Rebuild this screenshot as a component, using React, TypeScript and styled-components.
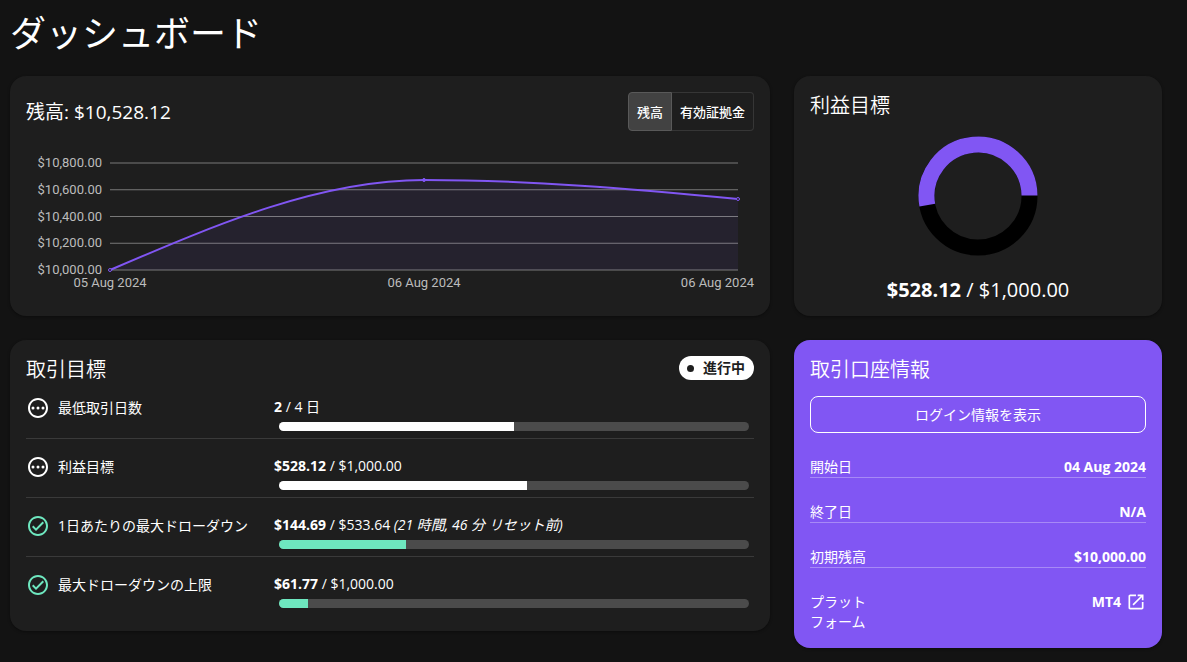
import React from "react";
import styled, { createGlobalStyle } from "styled-components";

const purple = "#8156f3";
const mint = "#6ee7bf";

const GlobalStyle = createGlobalStyle`
  * { box-sizing: border-box; }
  body {
    margin: 0;
    background: #131313;
    color: #fff;
    font-family: "Open Sans", "Noto Sans CJK JP", sans-serif;
    font-size: 14px;
    line-height: 20px;
  }
  h1, h2, p, dl, dd, ul { margin: 0; padding: 0; font-weight: 400; }
  ul { list-style: none; }
`;

const Page = styled.main`
  padding: 8px 25px 14px 10px;
`;

const PageTitle = styled.h1`
  font-family: "Noto Sans CJK JP", sans-serif;
  font-size: 36px;
  font-weight: 400;
  line-height: 46px;
  margin-bottom: 22px;
`;

const Grid = styled.div`
  display: grid;
  grid-template-columns: repeat(3, minmax(0, 1fr));
  gap: 24px;
  align-items: start;
`;

const Card = styled.section<{ $wide?: boolean; $accent?: boolean; $tall?: boolean }>`
  grid-column: span ${(p) => (p.$wide ? 2 : 1)};
  min-height: ${(p) => (p.$tall ? "240px" : "0")};
  padding: 16px;
  border-radius: 16px;
  background: ${(p) => (p.$accent ? purple : "#1e1e1e")};
  box-shadow: 0 1px 3px rgba(0, 0, 0, 0.4);
`;

const CardHeader = styled.header<{ $center?: boolean }>`
  display: flex;
  align-items: ${(p) => (p.$center ? "center" : "flex-start")};
  justify-content: space-between;
`;

const CardTitle = styled.h2`
  font-size: 20px;
  font-weight: 350;
  line-height: 28px;
`;

const BalanceTitle = styled(CardTitle)`
  font-size: 19px;
  font-weight: 400;
`;

const ToggleGroup = styled.div`
  display: flex;
`;

const ToggleButton = styled.button<{ $active?: boolean }>`
  height: 39px;
  padding: 0 8px;
  border: 1px solid ${(p) => (p.$active ? "#595959" : "#363636")};
  border-left-width: ${(p) => (p.$active ? "1px" : "0")};
  border-radius: ${(p) => (p.$active ? "4px 0 0 4px" : "0 4px 4px 0")};
  background: ${(p) => (p.$active ? "#424242" : "transparent")};
  color: #fff;
  font-family: inherit;
  font-size: 13px;
  font-weight: 500;
`;

const ChartArea = styled.div`
  margin-top: 24px;
`;

const PlotRow = styled.div`
  display: flex;
  gap: 8px;
  padding-right: 16px;
`;

const YAxis = styled.ul`
  display: flex;
  flex-direction: column;
  justify-content: space-between;
  width: 76px;
  height: 123px;
  color: #bcbcbc;
  font-family: Roboto, sans-serif;
  font-size: 13px;
  line-height: 16px;
  text-align: right;
`;

const Plot = styled.svg`
  display: block;
  flex: 1;
  min-width: 0;
  height: 123px;
  overflow: visible;
`;

const XAxis = styled.ul`
  display: grid;
  grid-template-columns: 1fr 1fr 16px;
  padding-left: 84px;
  margin-top: -3px;
  color: #bcbcbc;
  font-family: Roboto, sans-serif;
  font-size: 13px;
  line-height: 16px;
  white-space: nowrap;
`;

const XTick = styled.li<{ $end?: boolean }>`
  display: flex;
  width: ${(p) => (p.$end ? "100%" : "0")};
  justify-content: ${(p) => (p.$end ? "flex-end" : "center")};
`;

const Donut = styled.svg`
  display: block;
  width: 120px;
  height: 120px;
  margin: 16px auto 24px;
`;

const ProfitText = styled.p`
  font-size: 20px;
  line-height: 20px;
  text-align: center;
`;

const StatusChip = styled.span`
  display: flex;
  align-items: center;
  gap: 9px;
  height: 24px;
  padding: 0 9px 0 8px;
  border-radius: 12px;
  background: #fff;
  color: #1e1e1e;
  font-weight: 700;
`;

const Dot = styled.span`
  width: 7px;
  height: 7px;
  border-radius: 50%;
  background: #1e1e1e;
`;

const GoalRow = styled.li`
  display: grid;
  grid-template-columns: 248px minmax(0, 1fr);
  height: 59px;
  padding-top: 16px;
  border-bottom: 1px solid #3a3a3a;

  &:first-child { height: 55px; padding-top: 12px; }
  &:last-child { height: 58px; border-bottom: 0; }
`;

const GoalLabel = styled.div`
  display: flex;
  align-items: center;
  gap: 8px;
  height: 24px;
`;

const GoalIcon = styled.svg`
  flex: none;
  width: 24px;
  height: 24px;
`;

const GoalValue = styled.p`
  line-height: 22px;
`;

const ProgressTrack = styled.div`
  height: 9px;
  margin: 4px 5px 0;
  border-radius: 5px;
  background: #4b4b4b;
  overflow: hidden;
`;

const ProgressFill = styled.div<{ $color: string }>`
  height: 100%;
  background: ${(p) => p.$color};
`;

const LoginButton = styled.button`
  display: block;
  width: 100%;
  height: 37px;
  margin: 12px 0 24px;
  border: 1px solid #fff;
  border-radius: 8px;
  background: transparent;
  color: #fff;
  font: inherit;
`;

const Details = styled.dl`
  display: grid;
  gap: 24px;
`;

const DetailRow = styled.div`
  display: flex;
  justify-content: space-between;
  align-items: flex-start;
  border-bottom: 1px solid rgba(255, 255, 255, 0.3);

  &:last-child { border-bottom: 0; }
`;

const DetailTerm = styled.dt`
  max-width: 64px;
`;

const DetailValue = styled.dd`
  display: flex;
  align-items: center;
  gap: 5px;
  font-weight: 700;
`;

const PlatformLink = styled.a`
  display: flex;
  color: inherit;
`;

const goals = [
  { label: "最低取引日数", value: "2", total: "/ 4 日", note: "", percent: 50, done: false },
  { label: "利益目標", value: "$528.12", total: "/ $1,000.00", note: "", percent: 52.8, done: false },
  { label: "1日あたりの最大ドローダウン", value: "$144.69", total: "/ $533.64", note: "(21 時間, 46 分 リセット前)", percent: 27.1, done: true },
  { label: "最大ドローダウンの上限", value: "$61.77", total: "/ $1,000.00", note: "", percent: 6.2, done: true },
];

function StatusIcon({ done }: { done: boolean }) {
  return done ? (
    <GoalIcon viewBox="0 0 24 24" fill={mint} aria-hidden="true">
      <path d="M12 2C6.48 2 2 6.48 2 12s4.48 10 10 10 10-4.48 10-10S17.52 2 12 2zm0 18c-4.41 0-8-3.59-8-8s3.59-8 8-8 8 3.59 8 8-3.59 8-8 8zm4.59-12.42L10 14.17l-2.59-2.58L6 13l4 4 8-8z" />
    </GoalIcon>
  ) : (
    <GoalIcon viewBox="0 0 24 24" fill="#fff" aria-hidden="true">
      <path d="M12 2C6.48 2 2 6.48 2 12s4.48 10 10 10 10-4.48 10-10S17.52 2 12 2zm0 18c-4.42 0-8-3.58-8-8s3.58-8 8-8 8 3.58 8 8-3.58 8-8 8z" />
      <circle cx="7" cy="12" r="1.5" />
      <circle cx="12" cy="12" r="1.5" />
      <circle cx="17" cy="12" r="1.5" />
    </GoalIcon>
  );
}

const gridLines = [8, 34.75, 61.5, 88.25, 115];
const curve = "M0 115C105 70 209 25 314 25C419 25 523 34 628 44";

function BalanceChart() {
  return (
    <ChartArea>
      <PlotRow>
        <YAxis>
          {["$10,800.00", "$10,600.00", "$10,400.00", "$10,200.00", "$10,000.00"].map((t) => (
            <li key={t}>{t}</li>
          ))}
        </YAxis>
        <Plot viewBox="0 0 628 123" preserveAspectRatio="none" role="img" aria-label="残高">
          <path d={`${curve}V115H0Z`} fill={purple} fillOpacity="0.08" />
          {gridLines.map((y) => (
            <line key={y} x1="0" x2="628" y1={y} y2={y} stroke="#fff" strokeOpacity="0.4" />
          ))}
          <path d={curve} fill="none" stroke={purple} strokeWidth="2" />
          <circle cx="0" cy="115" r="1.5" fill="#1e1e1e" stroke={purple} />
          <circle cx="314" cy="25" r="1.5" fill={purple} stroke={purple} />
          <circle cx="628" cy="44" r="1.5" fill="#1e1e1e" stroke={purple} />
        </Plot>
      </PlotRow>
      <XAxis>
        <XTick>05 Aug 2024</XTick>
        <XTick>06 Aug 2024</XTick>
        <XTick $end>06 Aug 2024</XTick>
      </XAxis>
    </ChartArea>
  );
}

export default function App() {
  return (
    <>
      <GlobalStyle />
      <Page>
        <PageTitle>ダッシュボード</PageTitle>
        <Grid>
          <Card $wide $tall>
            <CardHeader $center>
              <BalanceTitle>残高: $10,528.12</BalanceTitle>
              <ToggleGroup>
                <ToggleButton type="button" $active aria-pressed="true">残高</ToggleButton>
                <ToggleButton type="button" aria-pressed="false">有効証拠金</ToggleButton>
              </ToggleGroup>
            </CardHeader>
            <BalanceChart />
          </Card>

          <Card $tall>
            <CardTitle>利益目標</CardTitle>
            <Donut viewBox="0 0 120 120" fill="none" strokeWidth="16" role="img" aria-label="利益目標">
              <circle cx="60" cy="60" r="51.5" stroke="#000" />
              <path d="M111.5 59.5A51.5 51.5 0 1 0 9.3 69.1" stroke={purple} />
            </Donut>
            <ProfitText>
              <b>$528.12</b> / $1,000.00
            </ProfitText>
          </Card>

          <Card $wide>
            <CardHeader>
              <CardTitle>取引目標</CardTitle>
              <StatusChip>
                <Dot />
                進行中
              </StatusChip>
            </CardHeader>
            <ul>
              {goals.map((g) => (
                <GoalRow key={g.label}>
                  <GoalLabel>
                    <StatusIcon done={g.done} />
                    {g.label}
                  </GoalLabel>
                  <div>
                    <GoalValue>
                      <b>{g.value}</b> {g.total} {g.note && <i>{g.note}</i>}
                    </GoalValue>
                    <ProgressTrack role="progressbar" aria-label={g.label} aria-valuenow={g.percent}>
                      <ProgressFill $color={g.done ? mint : "#fff"} style={{ width: `${g.percent}%` }} />
                    </ProgressTrack>
                  </div>
                </GoalRow>
              ))}
            </ul>
          </Card>

          <Card $accent>
            <CardTitle>取引口座情報</CardTitle>
            <LoginButton type="button">ログイン情報を表示</LoginButton>
            <Details>
              <DetailRow>
                <DetailTerm>開始日</DetailTerm>
                <DetailValue>04 Aug 2024</DetailValue>
              </DetailRow>
              <DetailRow>
                <DetailTerm>終了日</DetailTerm>
                <DetailValue>N/A</DetailValue>
              </DetailRow>
              <DetailRow>
                <DetailTerm>初期残高</DetailTerm>
                <DetailValue>$10,000.00</DetailValue>
              </DetailRow>
              <DetailRow>
                <DetailTerm>プラットフォーム</DetailTerm>
                <DetailValue>
                  MT4
                  <PlatformLink href="#platform" aria-label="MT4">
                    <svg width="20" height="20" viewBox="0 0 24 24" fill="#fff" aria-hidden="true">
                      <path d="M19 19H5V5h7V3H5c-1.11 0-2 .9-2 2v14c0 1.1.89 2 2 2h14c1.1 0 2-.9 2-2v-7h-2v7zM14 3v2h3.59l-9.83 9.83 1.41 1.41L19 6.41V10h2V3h-7z" />
                    </svg>
                  </PlatformLink>
                </DetailValue>
              </DetailRow>
            </Details>
          </Card>
        </Grid>
      </Page>
    </>
  );
}
